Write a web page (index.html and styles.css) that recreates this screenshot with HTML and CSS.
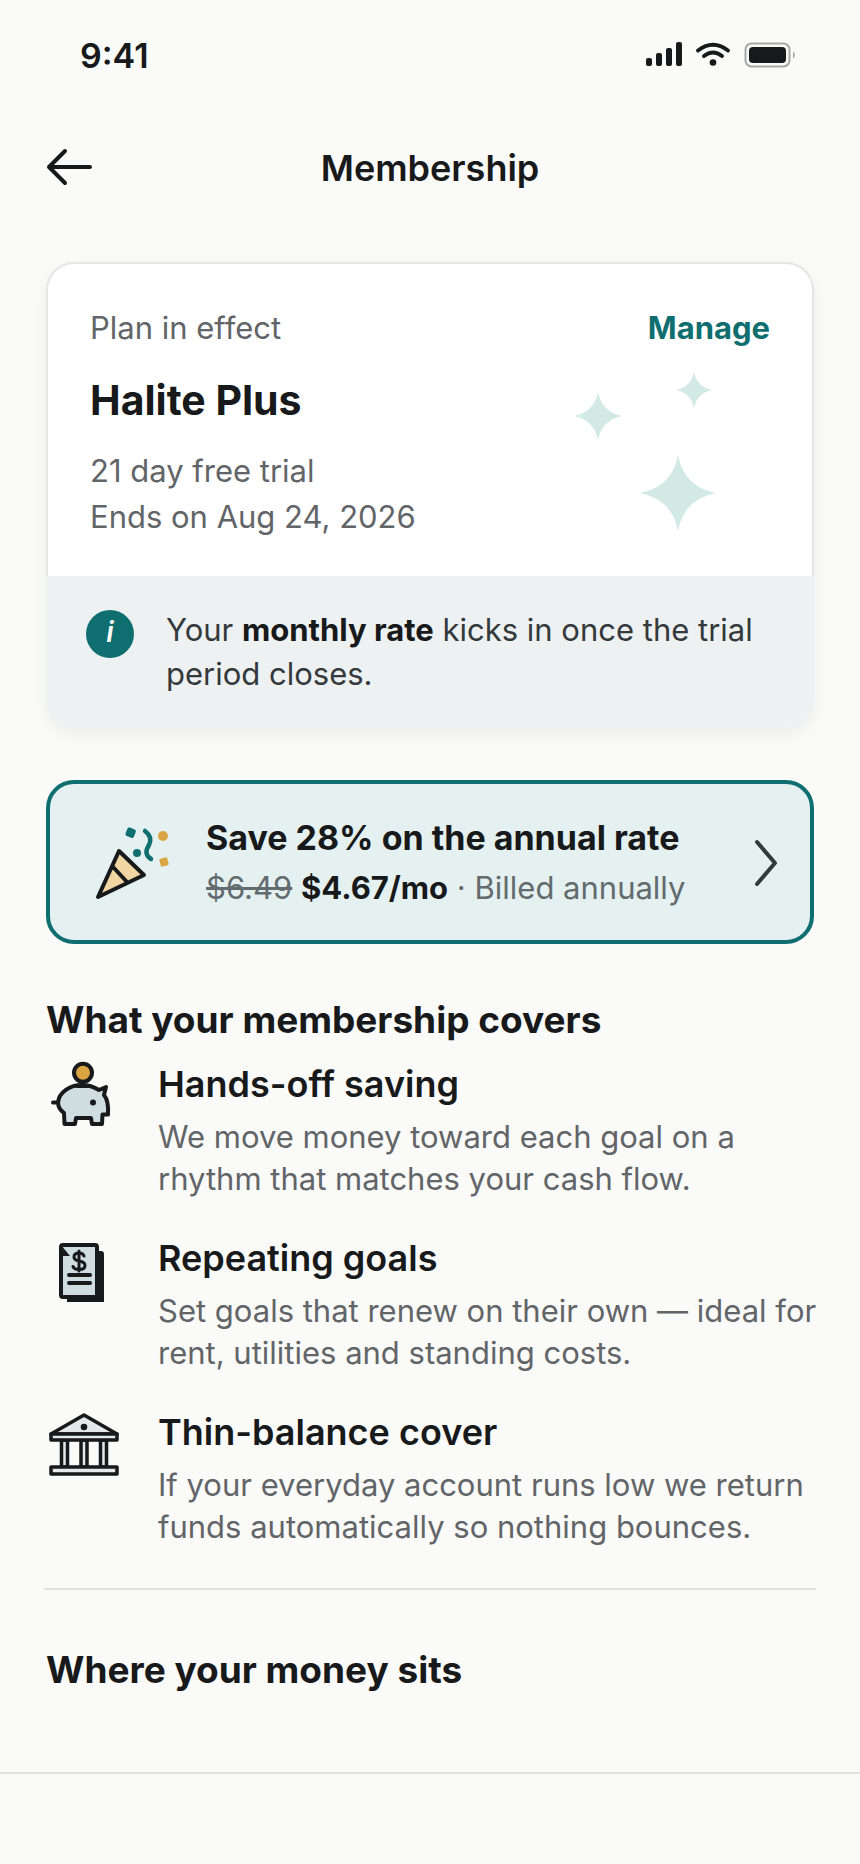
FILE: index.html
```
<!DOCTYPE html>
<html lang="en">

<head>
  <title>Membership</title>
  <meta charset="utf-8" />
  <meta name="viewport" content="width=device-width, initial-scale=1.0" />
  <link rel="stylesheet" href="styles.css">
</head>

<body>
  <div class="status">
    <span class="time">9:41</span>
    <svg class="status-icons" width="150" height="28" viewBox="0 0 150 28">
      <g fill="#17191a">
        <rect x="0" y="16" width="6" height="8" rx="2" />
        <rect x="10" y="11" width="6" height="13" rx="2" />
        <rect x="20" y="6" width="6" height="18" rx="2" />
        <rect x="30" y="0" width="6" height="24" rx="2" />
        <circle cx="67" cy="20.500" r="3.300" />
        <rect x="103" y="5" width="37" height="16" rx="4" />
      </g>
      <path d="M52 8.500Q67-3 82 8.500M58 14Q67 7 76 14" fill="none" stroke="#17191a" stroke-width="3.800" stroke-linecap="round" />
      <rect x="99.500" y="1.500" width="44" height="23" rx="6" fill="none" stroke="#a7a8a8" stroke-width="2" />
      <path d="M147 9.500q2 1 2 3.500t-2 3.500z" fill="#a7a8a8" />
    </svg>
  </div>

  <header class="nav">
    <button class="back" type="button" aria-label="Back">
      <svg width="48" height="40" viewBox="0 0 48 40">
        <path d="M46 19H5M21 3L5 19l16 16" />
      </svg>
    </button>
    <h1>Membership</h1>
  </header>

  <main>
    <section class="card">
      <div class="plan">
        <div class="plan-head">
          <span>Plan in effect</span>
          <a href="#manage">Manage</a>
        </div>
        <h2>Halite Plus</h2>
        <p>21 day free trial<br />Ends on Aug 24, 2026</p>
        <svg class="stars" width="144" height="160" viewBox="0 0 144 160">
          <path d="M24 20q4 20 24 24-20 4-24 24-4-20-24-24 20-4 24-24z" />
          <path d="M120 0q3 15 18 18-15 3-18 18-3-15-18-18 15-3 18-18z" />
          <path d="M104 83q6 32 38 38-32 6-38 38-6-32-38-38 32-6 38-38z" />
        </svg>
      </div>
      <div class="note">
        <span class="info">i</span>
        <p>Your <strong>monthly rate</strong> kicks in once the trial period closes.</p>
      </div>
    </section>

    <a class="promo" href="#annual">
      <svg class="popper" width="76" height="76" viewBox="0 0 76 76">
        <path d="M25 27L4 73l46-22z" fill="#f1d6a4" />
        <path d="M25 27L4 73l46-22zM19 43l14 15" fill="none" stroke="#17191a" stroke-width="4" stroke-linejoin="round" />
        <path d="M51 7q8 6 4 14-6 9 2 14" fill="none" stroke="#0f6e70" stroke-width="4.500" stroke-linecap="round" />
        <rect x="32" y="4" width="9" height="9" rx="2" fill="#0f6e70" transform="rotate(22 36 9)" />
        <circle cx="43" cy="29" r="4" fill="#0f6e70" />
        <circle cx="69" cy="12" r="5" fill="#d9a441" />
        <rect x="66" y="34" width="8" height="8" rx="1" fill="#d9a441" transform="rotate(-15 70 38)" />
      </svg>
      <span class="promo-text">
        <strong>Save 28% on the annual rate</strong>
        <span><s>$6.49</s> <b>$4.67/mo</b> · Billed annually</span>
      </span>
      <svg class="chevron" width="24" height="48" viewBox="0 0 24 48">
        <path d="M3 4l18 21L3 46" />
      </svg>
    </a>

    <section class="covers">
      <h2>What your membership covers</h2>
      <ul>
        <li>
          <svg class="icon" width="76" height="76" viewBox="0 0 76 76">
            <g stroke="#17191a" stroke-width="4" stroke-linejoin="round" stroke-linecap="round">
              <path d="M7 42.500h5C13 32 24 25 36 25q9 0 17 5l7-3-2 8q5 6 4 19.500h-5.500l-.5 9.500H46l-1-6H30l-1 6H18.500l-.5-11q-6-4-6-11.500" fill="#cfdde1" />
              <path d="M31 26h12" />
              <circle cx="37" cy="12.700" r="9" fill="#d9a441" />
            </g>
            <circle cx="47" cy="42.500" r="3" fill="#17191a" />
          </svg>
          <div>
            <h3>Hands-off saving</h3>
            <p>We move money toward each goal on a rhythm that matches your cash flow.</p>
          </div>
        </li>
        <li>
          <svg class="icon" width="76" height="76" viewBox="0 0 76 76">
            <path d="M21 17h34q3 0 3 3v48H21z" fill="#17191a" />
            <rect x="15" y="11" width="36" height="52" rx="2" fill="#cfdde1" stroke="#17191a" stroke-width="4" />
            <path d="M15 11v11h9z" fill="#17191a" />
            <path d="M23 41h21M23 49h21" stroke="#17191a" stroke-width="4" stroke-linecap="round" />
            <path d="M38 22q-1-3-5-3-5 0-5 4 0 3 5 4 6 1 6 4.500 0 4-6 4-5 0-6-3M33 17v20" fill="none" stroke="#17191a" stroke-width="3" stroke-linecap="round" />
          </svg>
          <div>
            <h3>Repeating goals</h3>
            <p>Set goals that renew on their own — ideal for rent, utilities and standing costs.</p>
          </div>
        </li>
        <li>
          <svg class="icon" width="76" height="76" viewBox="0 0 76 76">
            <g stroke="#17191a" stroke-width="3.500" stroke-linejoin="round" fill="#e3e8ea">
              <path d="M15.500 32h6v27h-6zM35 32h6v27h-6zM54.500 32h6v27h-6z" />
              <path d="M5 26L38 7l33 19z" />
              <path d="M5 26h66v6H5zM5 59h66v7H5z" />
            </g>
            <circle cx="38" cy="19" r="3.300" fill="#17191a" />
          </svg>
          <div>
            <h3>Thin-balance cover</h3>
            <p>If your everyday account runs low we return funds automatically so nothing bounces.</p>
          </div>
        </li>
      </ul>
    </section>

    <section class="money">
      <h2>Where your money sits</h2>
    </section>
  </main>
  <footer class="bottom"></footer>
</body>

</html>
```
FILE: styles.css
```
* {
  box-sizing: border-box;
}
body {
  font-family: Inter, 'Liberation Sans', sans-serif;
  font-size: 31px;
  line-height: 44px;
  background: #fafaf8;
  color: #17191a;
  margin: 0;
}
h1,
h2,
h3,
p,
ul {
  margin: 0;
  padding: 0;
}
svg {
  display: block;
  flex: none;
}
a {
  color: inherit;
  text-decoration: none;
}
.status {
  display: flex;
  align-items: center;
  justify-content: space-between;
  height: 112px;
  padding: 0 64px 0 80px;
}
.time {
  font-size: 34px;
  font-weight: 600;
}
.nav {
  display: grid;
  grid-template-columns: 48px 1fr 48px;
  align-items: center;
  height: 112px;
  padding: 0 44px;
}
.nav h1 {
  font-size: 36px;
  font-weight: 600;
  line-height: 48px;
  text-align: center;
}
.back {
  padding: 0;
  border: 0;
  background: none;
}
.back path {
  fill: none;
  stroke: #17191a;
  stroke-width: 4;
  stroke-linecap: round;
  stroke-linejoin: round;
}
main {
  padding: 38px 46px 0;
}
.card {
  border-radius: 28px;
  box-shadow: 0 6px 16px rgba(0, 0, 0, 0.06);
}
.plan {
  position: relative;
  padding: 42px 42px 36px;
  background: #fff;
  border: 2px solid #e4e5e5;
  border-bottom: 0;
  border-radius: 28px 28px 0 0;
  color: #626568;
}
.plan-head {
  display: flex;
  justify-content: space-between;
}
.plan-head a {
  color: #0f6e70;
  font-weight: 700;
}
.plan h2 {
  margin: 24px 0 22px;
  color: #17191a;
  font-size: 41px;
  line-height: 52px;
}
.plan p {
  line-height: 46px;
}
.stars {
  position: absolute;
  right: 94px;
  top: 108px;
  fill: #d3e9e4;
}
.note {
  display: flex;
  gap: 32px;
  padding: 32px 40px;
  background: #edf1f2;
  border-radius: 0 0 28px 28px;
  color: #34393b;
}
.note strong {
  color: #17191a;
}
.info {
  flex: none;
  width: 48px;
  height: 48px;
  margin-top: 2px;
  border-radius: 50%;
  background: #0f6e70;
  color: #fff;
  font-size: 28px;
  font-style: italic;
  font-weight: 600;
  text-align: center;
}
.promo {
  display: flex;
  align-items: center;
  min-height: 164px;
  margin-top: 52px;
  padding: 0 32px 0 44px;
  background: #e5f0f1;
  border: 4px solid #0f6e70;
  border-radius: 28px;
}
.promo-text {
  flex: 1;
  display: flex;
  flex-direction: column;
  margin-left: 36px;
  padding-top: 2px;
  color: #626b6d;
  line-height: 50px;
}
.promo-text strong {
  font-size: 34px;
}
.promo-text strong,
.promo-text b {
  color: #17191a;
  font-weight: 700;
}
.chevron path {
  fill: none;
  stroke: #34393b;
  stroke-width: 4;
  stroke-linecap: round;
  stroke-linejoin: round;
}
.covers h2,
.money h2 {
  font-size: 37px;
  line-height: 48px;
}
.covers {
  margin-top: 52px;
  padding-bottom: 40px;
}
.covers ul {
  display: grid;
  gap: 34px;
  margin: 16px -10px 0 0;
  list-style: none;
}
.covers li {
  display: flex;
  gap: 36px;
}
.covers h3 {
  font-size: 36px;
  font-weight: 600;
  line-height: 48px;
}
.covers p {
  margin-top: 8px;
  color: #626568;
  line-height: 42px;
}
.money {
  margin: 0 -2px;
  padding: 56px 2px 78px;
  border-top: 2px solid #e0e1e1;
}
.bottom {
  height: 90px;
  border-top: 2px solid #e0e1e1;
}
```
